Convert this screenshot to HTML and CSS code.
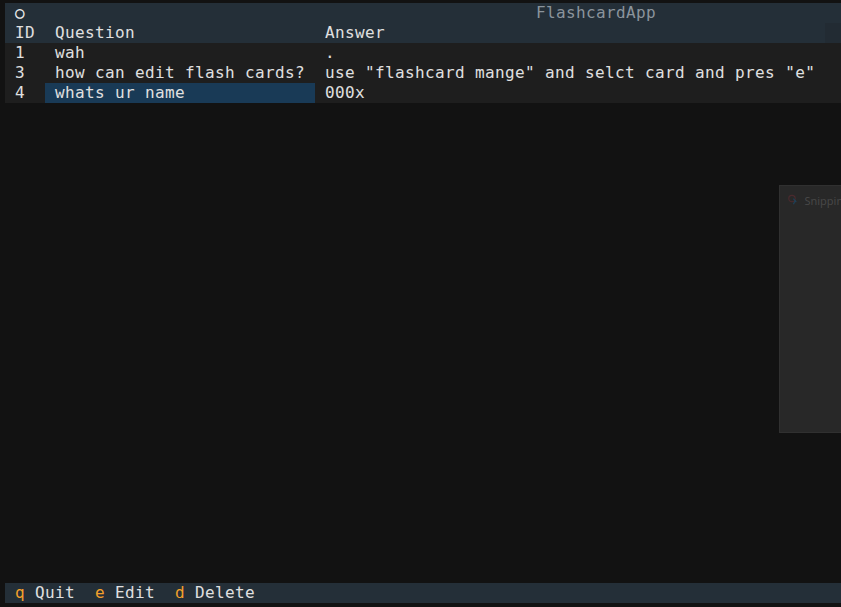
FILE: index.html
```html
<!DOCTYPE html>
<html>
<head>
<meta charset="utf-8">
<link rel="stylesheet" href="styles.css">
</head>
<body>
<div class="screen">
  <div class="titlebar">
    <span class="circle">○</span>
    <span class="title">FlashcardApp</span>
  </div>
  <div class="table">
    <div class="row head">
      <span class="c id">ID</span><span class="c q">Question</span><span class="c a">Answer</span><span class="corner"></span>
    </div>
    <div class="row">
      <span class="c id">1</span><span class="c q">wah</span><span class="c a">.</span>
    </div>
    <div class="row">
      <span class="c id">3</span><span class="c q">how can edit flash cards?</span><span class="c a">use "flashcard mange" and selct card and pres "e"</span>
    </div>
    <div class="row">
      <span class="c id">4</span><span class="c q sel">whats ur name</span><span class="c a">000x</span>
    </div>
  </div>
  <div class="body"></div>
  <div class="footer">
    <span class="key">q</span><span class="lbl">Quit</span>
    <span class="key">e</span><span class="lbl">Edit</span>
    <span class="key">d</span><span class="lbl">Delete</span>
  </div>
</div>
<div class="snip">
  <div class="snip-head">
    <svg class="snip-icon" width="16" height="16" viewBox="0 0 16 16">
      <circle cx="7" cy="6" r="4.5" fill="none" stroke="#4a2a2e" stroke-width="1.6"/>
      <path d="M9 6 L13 11 M9 14 L12 8" stroke="#1f3f55" stroke-width="1.8" fill="none"/>
    </svg>
    <span class="snip-text">Snipping</span>
  </div>
</div>
</body>
</html>
```
FILE: styles.css
```css
html, body {
  margin: 0;
  padding: 0;
  background: #121212;
  width: 841px;
  height: 607px;
  overflow: hidden;
}
.screen {
  box-sizing: border-box;
  width: 841px;
  height: 607px;
  padding: 3px 0 4px 5px;
  display: flex;
  flex-direction: column;
  font-family: "DejaVu Sans Mono", "Liberation Mono", monospace;
  font-size: 16px;
  letter-spacing: 0.37px;
  color: #e0e0e0;
}
.titlebar {
  height: 20px;
  line-height: 20px;
  background: #242f38;
  display: flex;
  white-space: pre;
}
.circle {
  margin-left: 10px;
  width: 10px;
  color: #eaeaea;
  font-weight: bold;
}
.title {
  margin-left: 511px;
  color: #8b949c;
}
.table {
  display: flex;
  flex-direction: column;
}
.row {
  height: 20px;
  line-height: 20px;
  display: flex;
  background: #1e1e1e;
  white-space: pre;
}
.row.head {
  background: #242f38;
}
.c {
  box-sizing: border-box;
  padding-left: 10px;
  height: 20px;
  flex: none;
}
.id { width: 40px; }
.q { width: 270px; }
.a { flex: 1; }
.sel { background: #193a56; }
.corner {
  width: 16px;
  background: #222b33;
  flex: none;
}
.body {
  flex: 1;
  background: #121212;
}
.footer {
  height: 20px;
  line-height: 20px;
  background: #242f38;
  display: flex;
  white-space: pre;
}
.key {
  color: #f3a02b;
  padding-left: 10px;
  padding-right: 10px;
}
.lbl {
  padding-right: 10px;
}
.snip {
  position: absolute;
  left: 779px;
  top: 185px;
  width: 70px;
  height: 246px;
  background: #282828;
  border: 1px solid #303030;
}
.snip-head {
  display: flex;
  align-items: center;
  gap: 6px;
  padding: 6px 0 0 7px;
}
.snip-text {
  font-family: "Noto Sans", "Liberation Sans", sans-serif;
  font-size: 11px;
  color: #474747;
}
```
